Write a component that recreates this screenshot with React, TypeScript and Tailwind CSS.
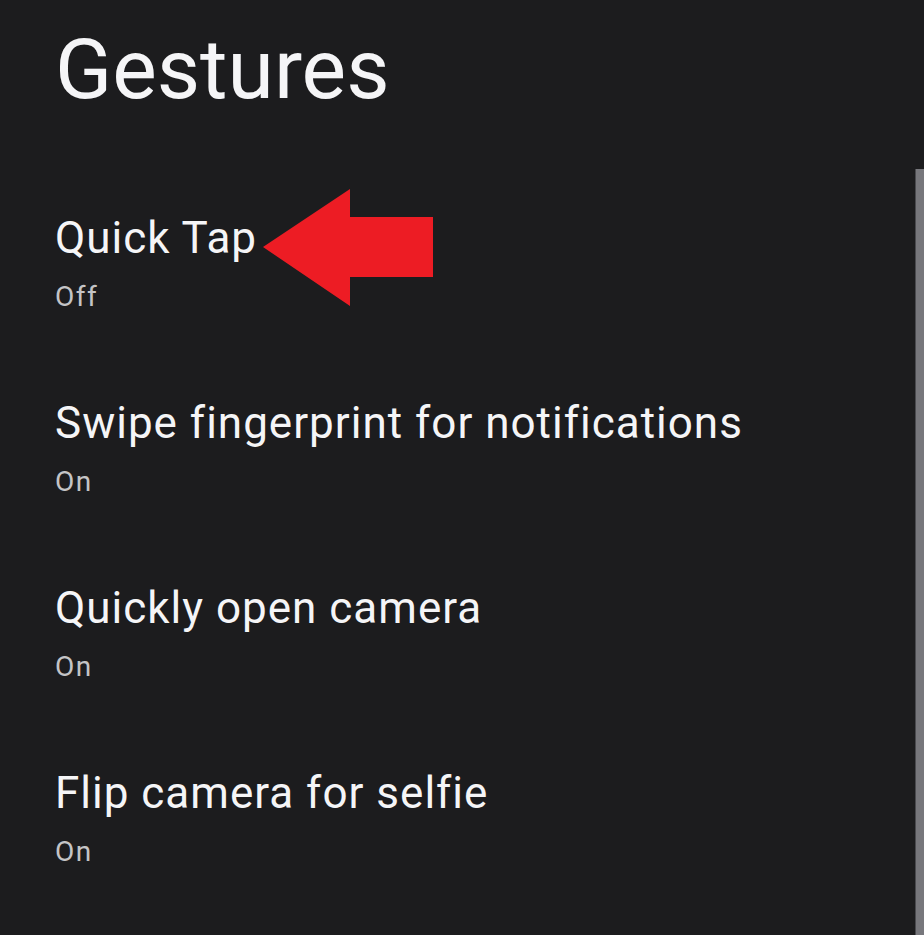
import React from "react";

const items = [
  { title: "Quick Tap", value: "Off" },
  { title: "Swipe fingerprint for notifications", value: "On" },
  { title: "Quickly open camera", value: "On" },
  { title: "Flip camera for selfie", value: "On" },
];

const Arrow = () => (
  <svg
    width="172"
    height="120"
    viewBox="0 0 172 120"
    className="absolute left-[262px] top-[187px]"
  >
    <polygon points="1,60 88,2 88,30 171,30 171,90 88,90 88,119" fill="#ed1c24" />
  </svg>
);

export default function App() {
  return (
    <div
      className="relative w-[924px] h-[935px] overflow-hidden bg-[#1c1c1e] text-[#f5f5f7]"
      style={{ fontFamily: "Roboto, 'Open Sans', sans-serif" }}
    >
      {/* scrollbar */}
      <div className="absolute right-0 top-[169px] bottom-0 w-[9px] bg-[#77777c] border-l border-[#4a4a4e]" />

      <div className="flex flex-col pl-[55px]">
        <h1 className="h-[205px] pt-[20px] text-[84px] leading-[100px] font-normal">Gestures</h1>

        <ul className="flex flex-col">
          {items.map((item) => (
            <li key={item.title} className="h-[185px] flex flex-col">
              <span className="text-[44px] leading-[56px] pt-[5px] tracking-[1px]">{item.title}</span>
              <span className="text-[28px] leading-[40px] pt-[11px] tracking-[1.5px] text-[#c4c4c6]">
                {item.value}
              </span>
            </li>
          ))}
        </ul>
      </div>

      <Arrow />
    </div>
  );
}
